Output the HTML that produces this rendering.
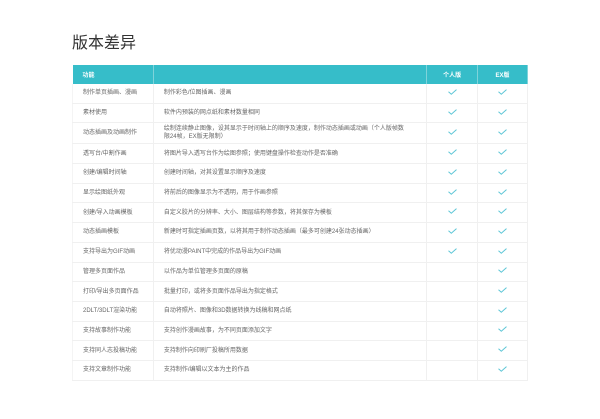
<!DOCTYPE html>
<html><head><meta charset="utf-8"><style>
body{margin:0;background:#fff;width:600px;height:419px;overflow:hidden;font-family:"Liberation Sans","Noto Sans CJK SC",sans-serif;}
h1{position:absolute;left:72px;top:34px;margin:0;font-size:16px;font-weight:normal;color:#333;line-height:20px}
table{position:absolute;left:72px;top:65px;border-collapse:collapse;width:456px;font-size:6px;color:#666}
th{background:#36bdc9;color:#fff;height:19px;font-weight:bold;text-align:left;padding:0 0 0 10px;border-right:1px solid #7fd3da}
th.c{text-align:center;padding:0}
td{height:18.7px;padding:0 0 0 10px;border-bottom:1px solid #f0f0f0;border-right:1px solid #f0f0f0;line-height:8px}
td:first-child{border-left:1px solid #f4f4f4}
td.c{text-align:center;padding:0}
tr.t td{height:20px;padding-right:6px}
tr.t td.c{padding:0}
.k{display:inline-block;width:9px;height:6px}
</style></head><body>
<h1>版本差异</h1>
<table>
<colgroup><col style="width:81px"><col style="width:274px"><col style="width:51px"><col style="width:50px"></colgroup>
<tr><th>功能</th><th></th><th class="c">个人版</th><th class="c">EX版</th></tr>
<tr><td>制作单页插画、漫画</td><td>制作彩色/位图插画、漫画</td><td class="c">Y</td><td class="c">Y</td></tr>
<tr><td>素材使用</td><td>软件内预装的网点纸和素材数量相同</td><td class="c">Y</td><td class="c">Y</td></tr>
<tr class="t"><td>动态插画及动画制作</td><td>绘制连续静止图像，设其显示于时间轴上的顺序及速度，制作动态插画或动画（个人版帧数<br>限24帧，EX版无限制）</td><td class="c">Y</td><td class="c">Y</td></tr>
<tr><td>透写台/中割作画</td><td>将图片导入透写台作为绘图参照；使用键盘操作检查动作是否准确</td><td class="c">Y</td><td class="c">Y</td></tr>
<tr><td>创建/编辑时间轴</td><td>创建时间轴，对其设置显示顺序及速度</td><td class="c">Y</td><td class="c">Y</td></tr>
<tr><td>显示绘图纸外观</td><td>将前后的图像显示为不透明，用于作画参照</td><td class="c">Y</td><td class="c">Y</td></tr>
<tr><td>创建/导入动画模板</td><td>自定义胶片的分辨率、大小、图层结构等参数，将其保存为模板</td><td class="c">Y</td><td class="c">Y</td></tr>
<tr><td>动态插画模板</td><td>新建时可指定插画页数，以将其用于制作动态插画（最多可创建24张动态插画）</td><td class="c">Y</td><td class="c">Y</td></tr>
<tr><td>支持导出为GIF动画</td><td>将优动漫PAINT中完成的作品导出为GIF动画</td><td class="c">Y</td><td class="c">Y</td></tr>
<tr><td>管理多页面作品</td><td>以作品为单位管理多页面的原稿</td><td></td><td class="c">Y</td></tr>
<tr><td>打印/导出多页面作品</td><td>批量打印，或将多页面作品导出为指定格式</td><td></td><td class="c">Y</td></tr>
<tr><td>2DLT/3DLT渲染功能</td><td>自动将照片、图像和3D数据转换为线稿和网点纸</td><td></td><td class="c">Y</td></tr>
<tr><td>支持故事制作功能</td><td>支持创作漫画故事，为不同页面添加文字</td><td></td><td class="c">Y</td></tr>
<tr><td>支持同人志投稿功能</td><td>支持制作向印刷厂投稿所用数据</td><td></td><td class="c">Y</td></tr>
<tr><td>支持文章制作功能</td><td>支持制作/编辑以文本为主的作品</td><td></td><td class="c">Y</td></tr>
</table>
<script>
document.querySelectorAll('td.c').forEach(function(t){t.innerHTML='<svg class="k" viewBox="0 0 9 6"><path d="M0.5 2.8 L3.3 5.2 L8.5 0.6" fill="none" stroke="#5cc6d6" stroke-width="1"/></svg>';});
</script>
</body></html>
